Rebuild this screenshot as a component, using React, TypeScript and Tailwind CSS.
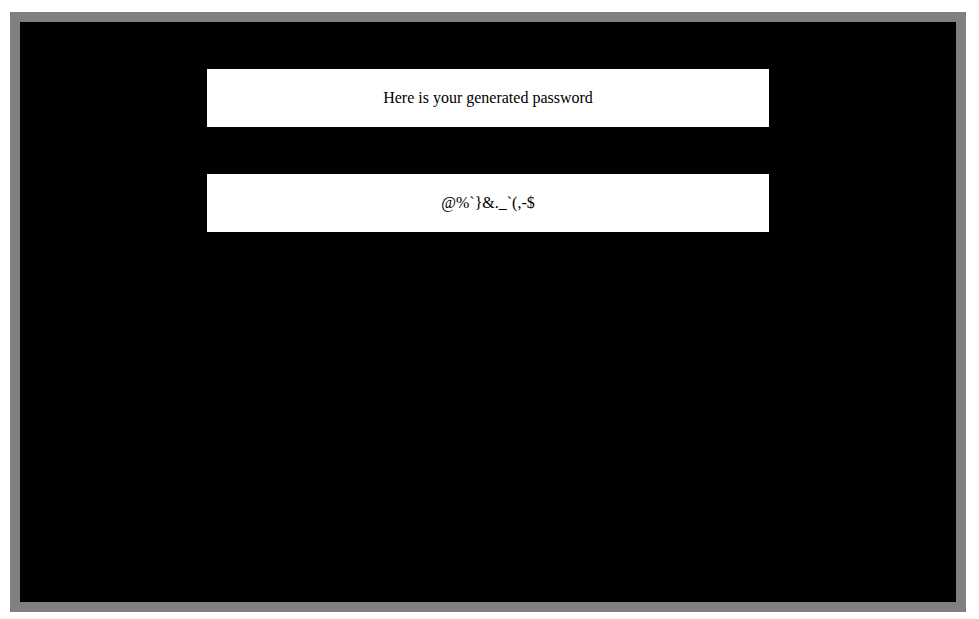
import React from 'react';

const App: React.FC = () => {
  const password = "@%`}&._`(,-$";
  return (
    <div className="pt-[12px] pl-[10px] font-['Liberation_Serif',serif]">
      <div className="w-[956px] h-[600px] border-[10px] border-[#808080] bg-black py-[47px]">
        <div className="flex flex-col items-center gap-[47px]">
          <div className="w-[562px] h-[58px] bg-white flex items-center justify-center text-base text-black">
            Here is your generated password
          </div>
          <div className="w-[562px] h-[58px] bg-white flex items-center justify-center text-base text-black">
            {password}
          </div>
        </div>
      </div>
    </div>
  );
};

export default App;
